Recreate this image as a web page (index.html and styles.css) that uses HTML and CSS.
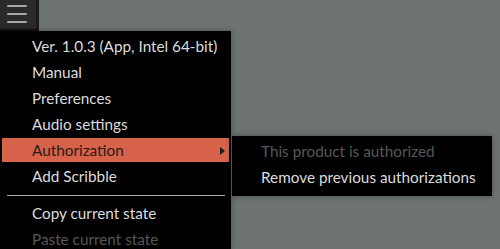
FILE: index.html
```html
<!DOCTYPE html>
<html>
<head>
<meta charset="utf-8">
<link rel="stylesheet" href="styles.css">
</head>
<body>
<div class="app">
  <button class="burger" aria-label="Menu">
    <span></span><span></span><span></span>
  </button>
  <ul class="menu">
    <li class="item">Ver. 1.0.3 (App, Intel 64-bit)</li>
    <li class="item">Manual</li>
    <li class="item">Preferences</li>
    <li class="item">Audio settings</li>
    <li class="item active">Authorization<span class="arrow"></span></li>
    <li class="item">Add Scribble</li>
    <li class="sep"></li>
    <li class="item">Copy current state</li>
    <li class="item disabled">Paste current state</li>
  </ul>
  <ul class="submenu">
    <li class="item disabled">This product is authorized</li>
    <li class="item">Remove previous authorizations</li>
  </ul>
</div>
</body>
</html>
```
FILE: styles.css
```css
html, body {
  margin: 0;
  padding: 0;
  width: 500px;
  height: 249px;
  overflow: hidden;
  background: #6e746f;
  font-family: "Lato", "Open Sans", sans-serif;
}
.app {
  position: relative;
  width: 500px;
  height: 249px;
}
.burger {
  display: flex;
  flex-direction: column;
  gap: 6px;
  padding: 5px 0 0 7px;
  margin: 0;
  width: 39px;
  height: 31px;
  box-sizing: border-box;
  background: #2a2a2a;
  border: none;
  border-right: 3px solid #1a1a1a;
  border-bottom: 2px solid #111;
}
.burger span {
  display: block;
  width: 20px;
  height: 2px;
  background: #a9a9a9;
  border-radius: 1px;
}
.menu, .submenu {
  list-style: none;
  margin: 0;
  display: flex;
  flex-direction: column;
  background: #000;
  box-shadow: 0 0 6px rgba(0,0,0,0.35);
}
.menu {
  position: absolute;
  left: 0;
  top: 31px;
  width: 231px;
  height: 218px;
  box-sizing: border-box;
  padding: 2px 0 0 0;
  overflow: hidden;
}
.submenu {
  position: absolute;
  left: 232px;
  top: 136px;
  width: 260px;
  box-sizing: border-box;
  padding: 2px 0 6px 0;
}
.item {
  position: relative;
  flex: none;
  height: 24px;
  margin: 1px 2px;
  padding-left: 30px;
  line-height: 25px;
  font-size: 15.3px;
  color: #dcdcdc;
  white-space: nowrap;
}
.submenu .item {
  padding-left: 27px;
}
.item.disabled {
  color: #575757;
}
.item.active {
  background: #d6634a;
  color: #2a1a16;
}
.arrow {
  position: absolute;
  right: 4px;
  top: 9px;
  width: 0;
  height: 0;
  border-top: 4px solid transparent;
  border-bottom: 4px solid transparent;
  border-left: 5px solid #1c1c1c;
}
.sep {
  flex: none;
  height: 1px;
  margin: 6px 6px 4px 7px;
  background: #a8a8a8;
}
```
